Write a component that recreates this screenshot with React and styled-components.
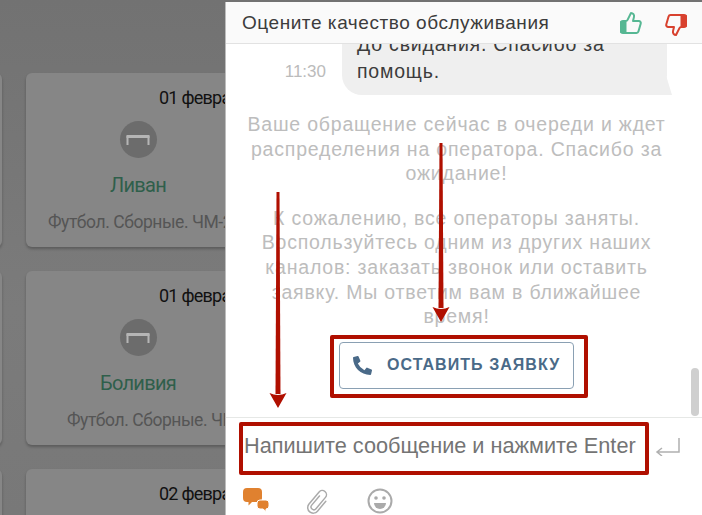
import React from 'react'
import styled, { createGlobalStyle } from 'styled-components'
import { FaPhoneAlt } from 'react-icons/fa'

const GlobalStyle = createGlobalStyle`
html, body {
    margin: 0;
    padding: 0;
    background: #7a7a7a;
}
* {
    box-sizing: border-box;
}
`
const Page = styled.div`
position: relative;
display: flex;
width: 702px;
height: 515px;
overflow: hidden;
font-family: "Liberation Sans", Arial, sans-serif;
background: linear-gradient(#727272, #7b7b7b 60%, #787878);
`
const CardsArea = styled.div`
flex: 0 0 447px;
min-width: 0;
display: grid;
grid-template-columns: 224px 224px;
grid-auto-rows: 174px;
gap: 24px;
margin-left: -222px;
padding-top: 73px;
overflow: hidden;
`
const Card = styled.div`
width: 224px;
padding-top: 15px;
background: #868686;
border-radius: 6px;
box-shadow: 0 2px 3px rgba(0, 0, 0, 0.25);
font-family: Roboto, sans-serif;
text-align: center;
white-space: nowrap;
`
const CardDate = styled.div`
padding-left: 133px;
text-align: left;
font-size: 18px;
line-height: 20px;
letter-spacing: -0.75px;
color: #111;
`
const GoalBadge = styled.div`
display: flex;
align-items: center;
justify-content: center;
width: 37px;
height: 37px;
margin: 13px auto 0;
border-radius: 50%;
background: #6c6c6c;
`
const TeamName = styled.div`
margin-top: 15px;
font-size: 20px;
line-height: 24px;
letter-spacing: -0.7px;
color: #2f5f4b;
`
const League = styled.div`
margin-top: 15px;
padding-left: ${(p) => p.$left}px;
text-align: left;
font-size: 17.5px;
line-height: 20px;
letter-spacing: -0.45px;
color: #555;
overflow: hidden;
`
const Panel = styled.div`
flex: 1;
display: flex;
flex-direction: column;
margin-top: 2px;
background: #fff;
border-left: 1px solid #bdbdbd;
min-width: 0;
`
const RateBar = styled.div`
flex: 0 0 42px;
display: flex;
align-items: center;
padding: 0 14px 0 16px;
background: #fafafa;
border-bottom: 1px solid #e2e2e2;
`
const RateTitle = styled.div`
flex: 1;
font-size: 19px;
letter-spacing: 0.55px;
color: #3c3c3c;
`
const RateIcons = styled.div`
display: flex;
gap: 21px;
align-items: center;
`
const Messages = styled.div`
position: relative;
flex: 1;
overflow: hidden;
padding-right: 15px;
border-bottom: 1px solid #e6e8e6;
`
const MessageRow = styled.div`
display: flex;
justify-content: flex-end;
align-items: flex-end;
gap: 16px;
margin-top: -23px;
padding-right: 20px;
`
const MessageTime = styled.div`
margin-bottom: 13px;
font-size: 17px;
color: #bbb;
`
const Bubble = styled.div`
position: relative;
width: 325px;
padding: 10px 15px;
background: #efefef;
border-radius: 20px;
font-size: 19.5px;
line-height: 27px;
letter-spacing: 0.8px;
color: #3c3c3c;
&::after {
    content: "";
    position: absolute;
    right: -5px;
    bottom: 0;
    width: 24px;
    height: 22px;
    background: #efefef;
    clip-path: polygon(0 0, 72% 0, 100% 100%, 0 100%);
}
`
const SystemNote = styled.p`
margin: ${(p) => p.$top}px 0 0;
text-align: center;
font-size: 19.5px;
line-height: 24.6px;
letter-spacing: 0.8px;
color: #bdbdbd;
`
const RedFrame = styled.div`
border: 4px solid #b00f00;
border-radius: 2px;
`
const ButtonFrame = styled(RedFrame)`
display: flex;
width: 258px;
height: 63px;
margin: 6px 0 0 104px;
padding: 3px 10px 5px 5px;
`
const LeaveButton = styled.button`
flex: 1;
display: flex;
align-items: center;
gap: 15px;
padding: 0 0 0 13px;
background: #fff;
border: 1.5px solid #8aa0b3;
border-radius: 4px;
font-family: "Liberation Sans", Arial, sans-serif;
font-size: 16px;
font-weight: 700;
letter-spacing: 1.05px;
color: #4a6a88;
white-space: nowrap;
`
const Scrollbar = styled.div`
position: absolute;
top: 324px;
right: 3px;
width: 8px;
height: 48px;
border-radius: 4px;
background: #cfcfcf;
`
const InputRow = styled.div`
display: flex;
align-items: flex-start;
gap: 6px;
padding: 4px 0 0 13px;
`
const InputFrame = styled(RedFrame)`
width: 410px;
height: 53px;
padding: 6px 0 0 1px;
font-size: 21.7px;
line-height: 27px;
color: #747474;
white-space: nowrap;
`
const EnterIcon = styled.svg`
margin-top: 16px;
`
const Tools = styled.div`
flex: 0 0 38px;
display: flex;
align-items: flex-start;
padding: 13px 0 0 17px;
`
const ToolSlot = styled.div`
display: flex;
width: ${(p) => p.$w}px;
`

// red pointers drawn over the chat
const Pointer = styled.svg`
position: absolute;
top: ${(p) => p.$top}px;
left: ${(p) => p.$left}px;
`

function GoalIcon() {
    return (
        <svg width="24" height="12" viewBox="0 0 24 12">
            <path d="M1.500 11V2M22.500 11V2" stroke="#b5b5b5" strokeWidth="2" fill="none" />
            <rect x="0.500" y="1" width="23" height="3" fill="#b5b5b5" />
        </svg>
    )
}

function MatchCard({ date, team, league, leagueLeft }) {
    return (
        <Card>
            <CardDate>{date}</CardDate>
            <GoalBadge><GoalIcon /></GoalBadge>
            <TeamName>{team}</TeamName>
            <League $left={leagueLeft}>{league}</League>
        </Card>
    )
}

function ThumbIcon({ color, down }) {
    return (
        <svg width="24" height="24" viewBox="0 0 24 24" fill="none" stroke={color} strokeWidth="2" strokeLinecap="round" strokeLinejoin="round" style={down ? { transform: 'rotate(180deg) translateY(-2px)' } : undefined}>
            <path d="M15 5.88 14 10h5.83a2 2 0 0 1 1.92 2.56l-2.33 8A2 2 0 0 1 17.5 22H4a2 2 0 0 1-2-2v-8a2 2 0 0 1 2-2h2.76a2 2 0 0 0 1.79-1.11L12 2a3.13 3.13 0 0 1 3 3.88Z" />
            <path d="M2 11h4.5v10H2z" fill={color} stroke={color} />
        </svg>
    )
}

function ChatIcon() {
    return (
        <svg width="26" height="24" viewBox="0 0 26 24" fill="#e0812f">
            <path d="M4 0h11a4 4 0 0 1 4 4v6a4 4 0 0 1-4 4H9l-3.500 3.500V14H4a4 4 0 0 1-4-4V4a4 4 0 0 1 4-4z" />
            <path d="M17 12h6a3 3 0 0 1 3 3v3a3 3 0 0 1-3 3v2.500L20 21h-3a3 3 0 0 1-3-3v-3a3 3 0 0 1 3-3z" stroke="#fff" strokeWidth="1" />
        </svg>
    )
}

function ClipIcon() {
    return (
        <svg width="24" height="27" viewBox="-1 -1 26 29" fill="none" stroke="#aaa" strokeWidth="1.600" strokeLinecap="round">
            <path transform="rotate(40 12 14)" d="M9 8v13a3 3 0 0 0 6 0V5a4.500 4.500 0 0 0-9 0v17a6 6 0 0 0 12 0V8" />
        </svg>
    )
}

function SmileIcon() {
    return (
        <svg width="26" height="26" viewBox="0 0 26 26">
            <circle cx="13" cy="13" r="11.500" fill="none" stroke="#aaa" strokeWidth="2" />
            <circle cx="9" cy="10" r="1.800" fill="#aaa" />
            <circle cx="17" cy="10" r="1.800" fill="#aaa" />
            <path d="M7 15h12a6 6 0 0 1-12 0z" fill="#aaa" />
        </svg>
    )
}

function Arrow({ left, top, length }) {
    return (
        <Pointer $left={left} $top={top} width="20" height={length} viewBox={`0 0 20 ${length}`}>
            <path d={`M8.500 0h3l1 ${length - 14}h-5z`} fill="#b00f00" />
            <path d={`M1.500 ${length - 15}Q10 ${length - 11} 18.500 ${length - 15}L10 ${length}z`} fill="#b00f00" />
        </Pointer>
    )
}

export default function App() {
    return (
        <Page>
            <GlobalStyle />
            <CardsArea>
                <Card />
                <MatchCard date="01 февраля" team="Ливан" league="Футбол. Сборные. ЧМ-2022" leagueLeft={22} />
                <Card />
                <MatchCard date="01 февраля" team="Боливия" league="Футбол. Сборные. ЧМ-2022" leagueLeft={41} />
                <Card />
                <MatchCard date="02 февраля" team="" league="" />
            </CardsArea>
            <Panel>
                <RateBar>
                    <RateTitle>Оцените качество обслуживания</RateTitle>
                    <RateIcons>
                        <ThumbIcon color="#56b793" />
                        <ThumbIcon color="#d8412e" down />
                    </RateIcons>
                </RateBar>
                <Messages>
                    <MessageRow>
                        <MessageTime>11:30</MessageTime>
                        <Bubble>До свидания. Спасибо за<br />помощь.</Bubble>
                    </MessageRow>
                    <SystemNote $top={17}>
                        Ваше обращение сейчас в очереди и ждет<br />
                        распределения на оператора. Спасибо за<br />
                        ожидание!
                    </SystemNote>
                    <SystemNote $top={20}>
                        К сожалению, все операторы заняты.<br />
                        Воспользуйтесь одним из других наших<br />
                        каналов: заказать звонок или оставить<br />
                        заявку. Мы ответим вам в ближайшее<br />
                        время!
                    </SystemNote>
                    <ButtonFrame>
                        <LeaveButton><FaPhoneAlt size={19} />ОСТАВИТЬ ЗАЯВКУ</LeaveButton>
                    </ButtonFrame>
                    <Scrollbar />
                </Messages>
                <InputRow>
                    <InputFrame>Напишите сообщение и нажмите Enter</InputFrame>
                    <EnterIcon width="25" height="18" viewBox="0 0 25 18" fill="none" stroke="#b0b0b0" strokeWidth="1.500">
                        <path d="M24 0v14H2M7 10l-5 4 5 4" />
                    </EnterIcon>
                </InputRow>
                <Tools>
                    <ToolSlot $w={63}><ChatIcon /></ToolSlot>
                    <ToolSlot $w={61}><ClipIcon /></ToolSlot>
                    <ToolSlot $w={30}><SmileIcon /></ToolSlot>
                </Tools>
            </Panel>
            <Arrow left={268} top={192} length={216} />
            <Arrow left={431} top={143} length={179} />
        </Page>
    )
}
